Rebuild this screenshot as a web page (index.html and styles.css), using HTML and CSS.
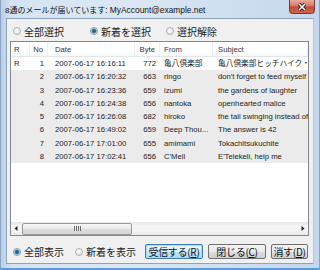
FILE: index.html
```html
<!DOCTYPE html>
<html lang="ja">
<head>
    <meta charset="UTF-8">
    <meta name="viewport" content="width=device-width, initial-scale=1.0">
    <title>新着メール</title>
    <link rel="stylesheet" href="styles.css">
</head>
<body>
    <div class="window">
        <div class="titlebar">
            <span class="title"><span class="title-jp">8通のメールが届いています</span>: MyAccount@example.net</span>
            <span class="close">
                <svg width="26" height="14" viewBox="0 0 26 14">
                    <defs>
                        <linearGradient id="red" x1="0" y1="0" x2="0" y2="1">
                            <stop offset="0" stop-color="#e9a99b"/>
                            <stop offset="0.45" stop-color="#d47a68"/>
                            <stop offset="0.5" stop-color="#c34a33"/>
                            <stop offset="1" stop-color="#d2664c"/>
                        </linearGradient>
                    </defs>
                    <path d="M0.5 0 V10.5 Q0.5 13.5 3.5 13.5 H22.5 Q25.5 13.5 25.5 10.5 V0" fill="url(#red)" stroke="#6e3a33"/>
                    <path d="M10 4 L16 10 M16 4 L10 10" stroke="#3a1a16" stroke-width="3.2"/>
                    <path d="M10 4 L16 10 M16 4 L10 10" stroke="#ffffff" stroke-width="1.6"/>
                </svg>
            </span>
        </div>
        <div class="frame">
            <div class="client">
                <div class="radio-row">
                    <label class="radio w77"><span class="mark"></span>全部選択</label>
                    <label class="radio w76 on"><span class="mark"></span>新着を選択</label>
                    <label class="radio"><span class="mark"></span>選択解除</label>
                </div>

                <div class="list">
                    <div class="list-body">
                        <div class="row head">
                            <span class="c-r">R</span>
                            <span class="c-no">No</span>
                            <span class="c-date">Date</span>
                            <span class="c-byte">Byte</span>
                            <span class="c-from">From</span>
                            <span class="c-subj">Subject</span>
                        </div>
                        <div class="row">
                            <span class="c-r">R</span>
                            <span class="c-no">1</span>
                            <span class="c-date">2007-06-17 16:16:11</span>
                            <span class="c-byte">772</span>
                            <span class="c-from">亀八倶楽部</span>
                            <span class="c-subj">亀八倶楽部ヒッチハイク・ガイド</span>
                        </div>
                        <div class="row sel">
                            <span class="c-r"></span>
                            <span class="c-no">2</span>
                            <span class="c-date">2007-06-17 16:20:32</span>
                            <span class="c-byte">663</span>
                            <span class="c-from">ringo</span>
                            <span class="c-subj">don't forget to feed myself</span>
                        </div>
                        <div class="row sel">
                            <span class="c-r"></span>
                            <span class="c-no">3</span>
                            <span class="c-date">2007-06-17 16:23:36</span>
                            <span class="c-byte">659</span>
                            <span class="c-from">izumi</span>
                            <span class="c-subj">the gardens of laughter</span>
                        </div>
                        <div class="row sel">
                            <span class="c-r"></span>
                            <span class="c-no">4</span>
                            <span class="c-date">2007-06-17 16:24:38</span>
                            <span class="c-byte">656</span>
                            <span class="c-from">nantoka</span>
                            <span class="c-subj">openhearted malice</span>
                        </div>
                        <div class="row sel">
                            <span class="c-r"></span>
                            <span class="c-no">5</span>
                            <span class="c-date">2007-06-17 16:26:08</span>
                            <span class="c-byte">682</span>
                            <span class="c-from">hiroko</span>
                            <span class="c-subj">the tail swinging instead of</span>
                        </div>
                        <div class="row sel">
                            <span class="c-r"></span>
                            <span class="c-no">6</span>
                            <span class="c-date">2007-06-17 16:49:02</span>
                            <span class="c-byte">659</span>
                            <span class="c-from">Deep Thou...</span>
                            <span class="c-subj">The answer is 42</span>
                        </div>
                        <div class="row sel">
                            <span class="c-r"></span>
                            <span class="c-no">7</span>
                            <span class="c-date">2007-06-17 17:01:00</span>
                            <span class="c-byte">655</span>
                            <span class="c-from">amimami</span>
                            <span class="c-subj">Tokachitsukuchite</span>
                        </div>
                        <div class="row sel">
                            <span class="c-r"></span>
                            <span class="c-no">8</span>
                            <span class="c-date">2007-06-17 17:02:41</span>
                            <span class="c-byte">656</span>
                            <span class="c-from">C'Mell</span>
                            <span class="c-subj">E'Telekeli, help me</span>
                        </div>
                    </div>
                    <!-- 横スクロールバー -->
                    <div class="hscroll">
                        <span class="arrow">
                            <svg width="4" height="5" viewBox="0 0 4 5"><path d="M3.5 0 L0.5 2.5 L3.5 5 Z" fill="#222"/></svg>
                        </span>
                        <div class="track">
                            <div class="thumb"><span class="grip"></span></div>
                        </div>
                        <span class="arrow">
                            <svg width="4" height="5" viewBox="0 0 4 5"><path d="M0.5 0 L3.5 2.5 L0.5 5 Z" fill="#222"/></svg>
                        </span>
                    </div>
                </div>

                <div class="bottom-row">
                    <label class="radio w62 on"><span class="mark"></span>全部表示</label>
                    <label class="radio"><span class="mark"></span>新着を表示</label>
                    <button class="btn default w58">受信する(<u>R</u>)</button>
                    <button class="btn w58">閉じる(<u>C</u>)</button>
                    <button class="btn w37">消す(<u>D</u>)</button>
                </div>
            </div>
        </div>
    </div>
</body>
</html>
```

FILE: styles.css
```css
body {
    margin: 0;
    padding: 0;
    background-color: #fff;
    font-family: 'Liberation Sans', 'Noto Sans CJK JP', sans-serif;
    color: #000;
}
.window {
    width: 320px;
    height: 270px;
    display: flex;
    flex-direction: column;
    box-sizing: border-box;
    background: linear-gradient(to right, #b9cee6 0, #d4e3f3 3%, #dbe7f4 40%, #cfdff0 70%, #c4d7ec 100%);
    border-left: 1px solid #8aa5c6;
    border-right: 1px solid #8aa5c6;
    border-bottom: 2px solid #5b9be0;
}
.titlebar {
    height: 18px;
    flex-shrink: 0;
    display: flex;
    align-items: flex-start;
}
.title {
    align-self: center;
    padding-left: 4px;
    font-size: 8.4px;
    white-space: nowrap;
    color: #111;
}
.title-jp {
    font-size: 8px;
}
.close {
    margin-left: auto;
    margin-right: 4px;
    height: 14px;
    line-height: 0;
}
.frame {
    flex: 1;
    padding: 0 5px 4px 5px;
    display: flex;
}
.client {
    flex: 1;
    display: flex;
    flex-direction: column;
    background-color: #f0f0f0;
    border: 1px solid #8ea2ba;
    border-right-color: #b9c8d9;
}
.radio-row {
    height: 22px;
    box-sizing: border-box;
    padding: 2px 0 0 6px;
    display: flex;
    align-items: center;
}
.radio {
    display: flex;
    align-items: center;
    font-size: 10px;
    font-family: 'Noto Sans CJK JP', sans-serif;
    color: #222;
    white-space: nowrap;
}
.radio .mark {
    width: 6px;
    height: 6px;
    border-radius: 50%;
    border: 1px solid #b0b0b0;
    background: radial-gradient(circle at 40% 35%, #ffffff, #d8d8d8);
    margin-right: 3px;
    flex-shrink: 0;
}
.radio.on .mark {
    border-color: #8f9aa4;
    background: radial-gradient(circle, #14507f 0, #2a7ab3 1.8px, #8fc2e0 2.5px, #e4e4e4 3px);
}
.w77 { width: 77px; }
.w76 { width: 76px; }
.w62 { width: 62px; }
.w58 { width: 58px; }
.w37 { width: 37px; }

.list {
    height: 195px;
    box-sizing: border-box;
    margin: 0 4px 0 3px;
    border: 1px solid #828790;
    background-color: #fff;
    display: flex;
    flex-direction: column;
    overflow: hidden;
}
.list-body {
    flex: 1;
}
.row {
    display: grid;
    grid-template-columns: 19px 18px 87px 25px 53px 1fr;
    height: 13.3px;
    line-height: 13.3px;
    font-size: 7.7px;
    color: #222;
    white-space: nowrap;
}
.row span {
    overflow: hidden;
    min-width: 0;
}
.row.sel {
    background-color: #ebebeb;
}
.row.head {
    height: 15px;
    line-height: 16px;
    color: #333;
    background: linear-gradient(#ffffff, #ffffff 60%, #f6f7f8);
    border-bottom: 1px solid #e3e5e8;
    box-sizing: border-box;
}
.row.head span {
    border-right: 1px solid #eceef0;
}
.c-r { padding-left: 3px; }
.c-no { text-align: right; padding-right: 4px; }
.c-date { padding-left: 7px; }
.c-byte { text-align: right; padding-right: 4px; }
.c-from { padding-left: 4px; }
.c-subj { padding-left: 5px; }

.hscroll {
    height: 13px;
    flex-shrink: 0;
    display: flex;
    background: linear-gradient(#e6e6e6, #f4f4f4 30%, #f4f4f4 70%, #e9e9e9);
}
.hscroll .arrow {
    width: 10px;
    display: flex;
    align-items: center;
    justify-content: center;
}
.track {
    flex: 1;
    display: flex;
    align-items: center;
}
.thumb {
    margin-left: 1px;
    width: 108px;
    height: 10px;
    border: 1px solid #9a9a9a;
    border-radius: 2px;
    background: linear-gradient(#f5f5f5, #ececec 45%, #dcdcdc 55%, #d4d4d4);
    display: flex;
    align-items: center;
    justify-content: center;
}
.grip {
    width: 7px;
    height: 5px;
    background: repeating-linear-gradient(to right, #6d6d6d 0 1px, #e8e8e8 1px 2px);
}

.bottom-row {
    flex: 1;
    box-sizing: border-box;
    padding: 4px 5px 0 6px;
    display: flex;
    align-items: center;
    gap: 0;
}
.btn {
    height: 15px;
    padding: 0;
    margin-left: 5px;
    border: 1px solid #707070;
    border-radius: 2px;
    background: linear-gradient(#f2f2f2, #ebebeb 50%, #dddddd 50%, #cfcfcf);
    font-family: 'Noto Sans CJK JP', sans-serif;
    font-size: 10px;
    line-height: 13px;
    color: #111;
    white-space: nowrap;
    display: flex;
    align-items: center;
    justify-content: center;
    letter-spacing: -0.3px;
}
.btn.default {
    margin-left: auto;
    border-color: #3c7fb1;
    box-shadow: inset 0 0 0 1px #a6dcf8;
    background: linear-gradient(#eaf6fd, #d9f0fc 50%, #bee6fd 50%, #a7d9f5);
}
.btn u {
    text-underline-offset: 1px;
}
```
